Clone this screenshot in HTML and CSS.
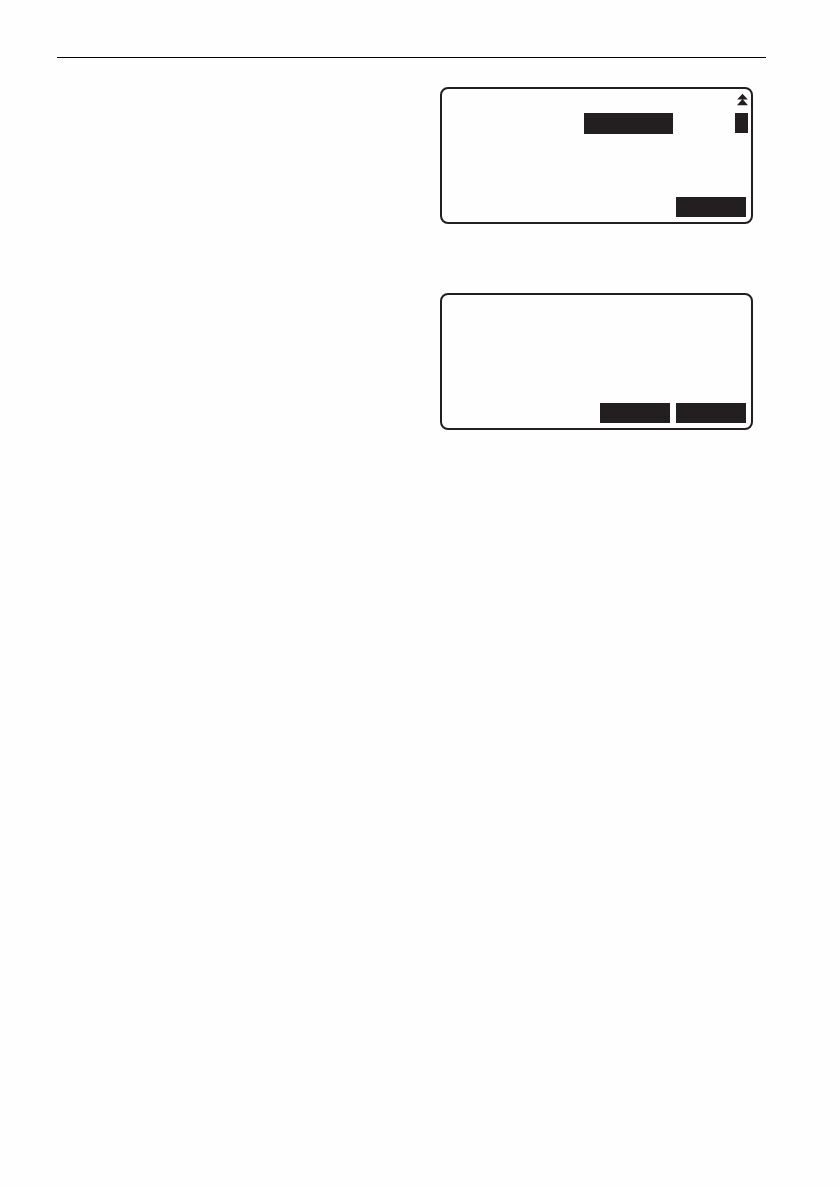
FILE: index.html
```html
<!DOCTYPE html>
<html lang="en">
<head>
<meta charset="utf-8">
<title>Display screens</title>
<link rel="stylesheet" href="styles.css">
</head>
<body>
<main class="page">
  <hr class="rule">
  <div class="screens">
    <section class="screen">
      <div class="status">
        <svg class="scroll-up" viewBox="0 0 11 11" aria-hidden="true">
          <path d="M5.5 -0.3L10.8 5.5H0.2Z M5.5 5L11 11.2H0Z"/>
        </svg>
      </div>
      <div class="entry">
        <div class="field"></div>
        <div class="cursor"></div>
      </div>
      <div class="softkeys">
        <button class="softkey" type="button" aria-label="Soft key"></button>
      </div>
    </section>
    <section class="screen">
      <div class="softkeys">
        <button class="softkey" type="button" aria-label="Left soft key"></button>
        <button class="softkey" type="button" aria-label="Right soft key"></button>
      </div>
    </section>
  </div>
</main>
</body>
</html>
```

FILE: styles.css
```css
:root {
  --ink: #231f20;
  --paper: #fefefe;
}

* {
  box-sizing: border-box;
}

body {
  margin: 0;
  background: var(--paper);
  font-family: "Liberation Sans", Arial, sans-serif;
}

.page {
  padding: 57px 74px 57px 57px;
}

.rule {
  height: 1px;
  margin: 0;
  border: 0;
  background: #000;
}

.screens {
  display: flex;
  flex-direction: column;
  align-items: flex-end;
  gap: 69px;
  padding: 29px 13px 0 0;
}

.screen {
  display: flex;
  flex-direction: column;
  width: 100%;
  max-width: 313px;
  min-height: 137px;
  padding: 5px 3px;
  border: 2px solid var(--ink);
  border-radius: 8px;
}

.status {
  display: flex;
  justify-content: flex-end;
  margin-bottom: 8px;
}

.scroll-up {
  width: 11px;
  height: 11px;
  overflow: visible;
  fill: var(--ink);
}

.entry {
  display: flex;
  justify-content: flex-end;
  align-items: flex-start;
  gap: 62px;
}

.field {
  width: 89px;
  height: 21px;
  background: var(--ink);
}

.cursor {
  width: 13px;
  height: 20px;
  background: var(--ink);
}

.softkeys {
  display: flex;
  justify-content: flex-end;
  gap: 6px;
  margin-top: auto;
  padding-right: 2px;
}

.softkey {
  width: 70px;
  height: 20px;
  padding: 0;
  border: 0;
  background: var(--ink);
}
```
